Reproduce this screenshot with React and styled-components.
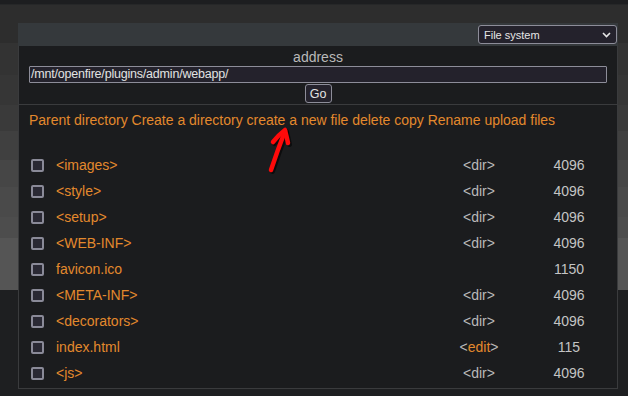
import React from 'react'
import styled, { createGlobalStyle } from 'styled-components'

const GlobalStyle = createGlobalStyle`
  html, body {
    margin: 0;
    padding: 0;
    background: #1e1f21;
  }
  body {
    font-family: "Liberation Sans", Arial, sans-serif;
  }
`

const Page = styled.div`
  position: relative;
  width: 628px;
  height: 396px;
  overflow: hidden;
  background: #1e1f21;
`

const TopStrip = styled.div`
  height: 4px;
  background: #1d1e20;
  border-bottom: 1px solid #262728;
`

const Stripe = styled.div`
  height: ${p => p.h}px;
  background: ${p => p.bg};
`

const Dialog = styled.div`
  position: absolute;
  left: 18px;
  top: 23px;
  width: 600px;
  height: 366px;
  box-sizing: border-box;
  display: flex;
  flex-direction: column;
  background: #1b1c1e;
  border: 1px solid #3a3b3d;
  border-top: none;
`

const Header = styled.div`
  height: 23px;
  margin: 0 -1px;
  background: #35393c;
  display: flex;
  align-items: center;
  justify-content: flex-end;
  padding-right: 1px;
`

const Select = styled.div`
  width: 139px;
  height: 19px;
  box-sizing: border-box;
  border: 1px solid #8d8d99;
  border-radius: 3px;
  background: #24222c;
  color: #e6e6e6;
  font-size: 11px;
  display: flex;
  align-items: center;
  justify-content: space-between;
  padding: 0 5px 0 5px;
`

const AddressBlock = styled.div`
  display: flex;
  flex-direction: column;
  align-items: center;
  padding: 3px 10px 1px;
  border-bottom: 1px solid #3a3b3d;
`

const Label = styled.div`
  color: #b9b9b9;
  font-size: 14px;
  line-height: 17px;
`

const PathInput = styled.div`
  align-self: stretch;
  height: 17px;
  box-sizing: border-box;
  border: 1px solid #8d8d99;
  border-radius: 1px;
  background: #24222c;
  color: #e2e2e2;
  font-size: 12.5px;
  line-height: 15px;
  padding: 0 1px;
  letter-spacing: -0.2px;
`

const GoButton = styled.div`
  margin-top: 1px;
  width: 27px;
  height: 19px;
  box-sizing: border-box;
  border: 1px solid #8d8d99;
  border-radius: 3px;
  background: #24222c;
  color: #e2e2e2;
  font-size: 12.5px;
  display: flex;
  align-items: center;
  justify-content: center;
`

const LinkBar = styled.div`
  padding: 6px 10px 0;
  line-height: 18px;
  font-size: 14px;
  letter-spacing: -0.01px;
  color: #e3892d;
  margin-bottom: 23px;
`

const Link = styled.span`
  cursor: pointer;
`

const FileTable = styled.div`
  display: flex;
  flex-direction: column;
`

const Row = styled.div`
  display: grid;
  grid-template-columns: 25px 1fr 90px 90px;
  align-items: center;
  height: 26px;
  padding: 0 3px 0 12px;
  font-size: 14px;
`

const Check = styled.span`
  width: 13px;
  height: 13px;
  box-sizing: border-box;
  border: 2px solid #8a8a98;
  border-radius: 2px;
  background: #2a2934;
`

const Name = styled.span`
  color: #e3892d;
`

const Kind = styled.span`
  color: #b9b9b9;
  text-align: center;
`

const Edit = styled.span`
  color: #e3892d;
`

const Size = styled.span`
  color: #c4c4c4;
  text-align: center;
`

const Arrow = styled.svg`
  position: absolute;
  left: 258px;
  top: 120px;
  overflow: visible;
`

const stripes = [
  [38, '#2d2d2d'],
  [32, '#333333'],
  [30, '#363636'],
  [26, '#3a3a3a'],
  [29, '#404040'],
  [27, '#464646'],
  [30, '#4a4a4a'],
  [21, '#4d4d4d'],
  [52, '#555555'],
]

const files = [
  { name: '<images>', kind: 'dir', size: 4096 },
  { name: '<style>', kind: 'dir', size: 4096 },
  { name: '<setup>', kind: 'dir', size: 4096 },
  { name: '<WEB-INF>', kind: 'dir', size: 4096 },
  { name: 'favicon.ico', kind: '', size: 1150 },
  { name: '<META-INF>', kind: 'dir', size: 4096 },
  { name: '<decorators>', kind: 'dir', size: 4096 },
  { name: 'index.html', kind: 'edit', size: 115 },
  { name: '<js>', kind: 'dir', size: 4096 },
]

const actions = [
  'Parent directory',
  'Create a directory',
  'create a new file',
  'delete',
  'copy',
  'Rename',
  'upload files',
]

const App = () => (
  <Page>
    <GlobalStyle />
    <TopStrip />
    {stripes.map(([h, bg], i) => (
      <Stripe key={i} h={h} bg={bg} />
    ))}
    <Dialog>
      <Header>
        <Select>
          <span>File system</span>
          <svg width="9" height="6" viewBox="0 0 9 6">
            <path d="M1 1l3.5 3.5L8 1" fill="none" stroke="#e6e6e6" strokeWidth="1.6" />
          </svg>
        </Select>
      </Header>
      <AddressBlock>
        <Label>address</Label>
        <PathInput>/mnt/openfire/plugins/admin/webapp/</PathInput>
        <GoButton>Go</GoButton>
      </AddressBlock>
      <LinkBar>
        {actions.map((a, i) => (
          <React.Fragment key={a}>
            <Link>{a}</Link>
            {i < actions.length - 1 ? ' ' : ''}
          </React.Fragment>
        ))}
      </LinkBar>
      <FileTable>
        {files.map(f => (
          <Row key={f.name}>
            <Check />
            <Name>{f.name}</Name>
            <Kind>
              {f.kind === 'dir' && '<dir>'}
              {f.kind === 'edit' && (
                <>
                  &lt;<Edit>edit</Edit>&gt;
                </>
              )}
            </Kind>
            <Size>{f.size}</Size>
          </Row>
        ))}
      </FileTable>
    </Dialog>
    <Arrow width="40" height="55" viewBox="0 0 40 55">
      <g fill="none" strokeLinecap="round" strokeLinejoin="round">
        <g stroke="rgba(0,0,0,0.55)" strokeWidth="5" transform="translate(1.5,1.5)">
          <path d="M13 50 C17 38 22 24 27 11" />
          <path d="M15 22 C19 17 23 13 27 10 C28 14 29 18 30 23" />
        </g>
        <g stroke="#ff0a0a" strokeWidth="4.5">
          <path d="M13 50 C17 38 22 24 27 11" />
          <path d="M15 22 C19 17 23 13 27 10 C28 14 29 18 30 23" />
        </g>
      </g>
    </Arrow>
  </Page>
)

export default App
